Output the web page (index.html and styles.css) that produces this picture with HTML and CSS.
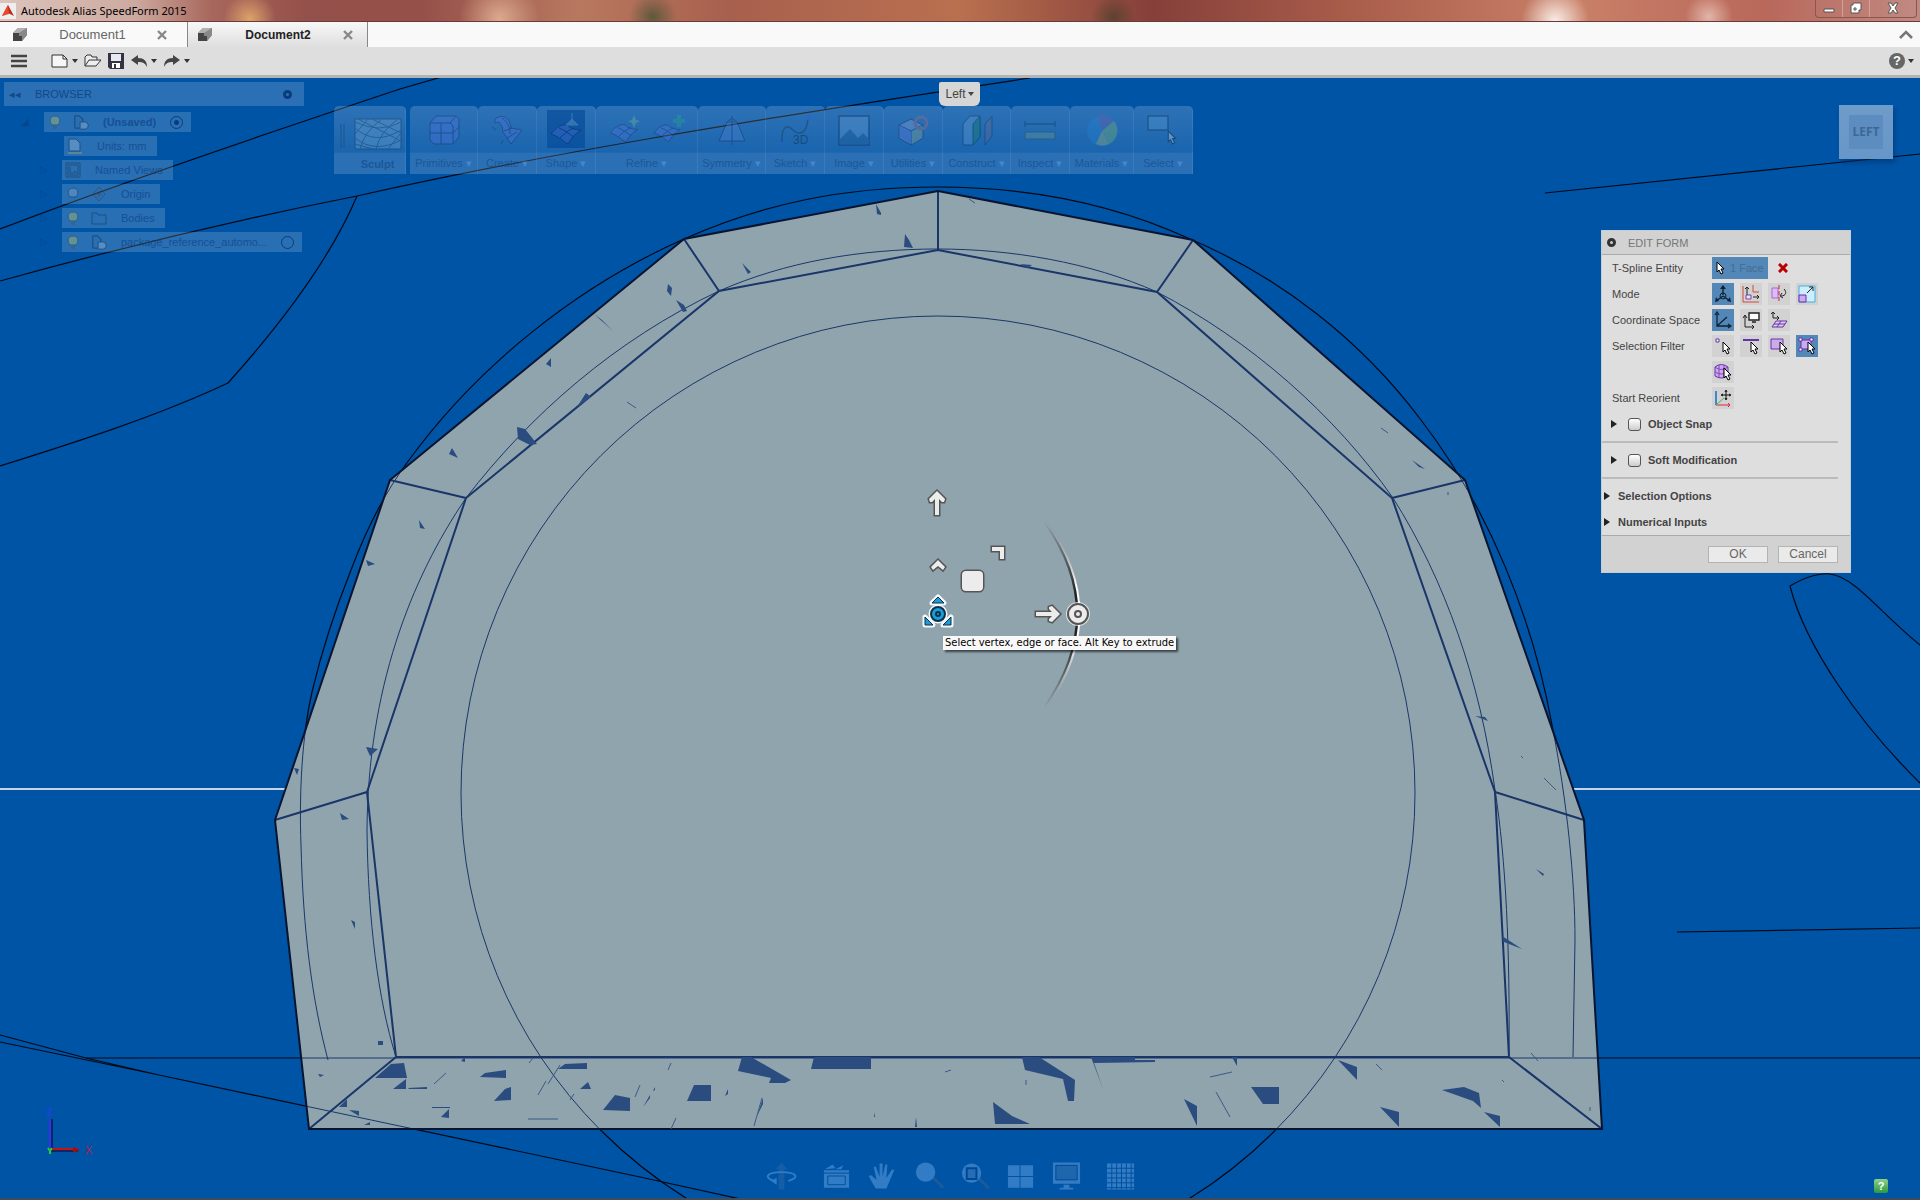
FILE: index.html
```html
<!DOCTYPE html>
<html lang="en">
<head>
  <meta charset="UTF-8">
  <meta name="viewport" content="width=device-width, initial-scale=1.0">
  <title>Autodesk Alias SpeedForm 2015</title>
  <link rel="stylesheet" href="styles.css">
</head>
<body>
  <!-- shared icons -->
  <svg class="defs" aria-hidden="true">
    <symbol id="cube" viewBox="0 0 16 16"><path d="M1 6L6 1h9v7l-5 6H1z" fill="#777"/><path d="M1 6h6v3h3v5H1z" fill="#444"/><path d="M7 6l8-5v7l-5 6V9H7z" fill="#888"/><path d="M1 6l5-5h9L7 6z" fill="#b0b0b0"/></symbol>
    <symbol id="close" viewBox="0 0 10 10"><path d="M1 1l8 8M9 1L1 9" stroke="#888" stroke-width="2.4"/></symbol>
    <symbol id="caret" viewBox="0 0 6 4"><path d="M0 0h6L3 4z" fill="currentColor"/></symbol>
    <symbol id="bulb" viewBox="0 0 16 16"><path d="M5 11C1 6 4 2 8 2s7 4 3 9z" fill="#b8c860" stroke="#344"/><path d="M6 12h4v3H6z" fill="#456"/></symbol>
    <symbol id="part" viewBox="0 0 18 18"><path d="M2 16V2h5l4 4v3M2 16h6" fill="none" stroke="#123" stroke-width="1.4"/><path d="M8 16V9h6l3 2v4l-3 2H8z" fill="#9bd" stroke="#123"/></symbol>
    <symbol id="pointer" viewBox="0 0 9 14"><path d="M1 1v10l2-2 2 4 2-1-2-4h3z" fill="#fff" stroke="#000"/></symbol>
    <symbol id="patch" viewBox="0 0 32 22"><path d="M1 11C7 3 13 1 17 2c4 4 9 5 14 5-5 3-10 8-13 14C13 18 8 13 1 11z" fill="#5a78f0" stroke="#113"/><path d="M9 5c6 2 11 7 15 9M24 5c-6 2-10 6-14 10" stroke="#113" fill="none"/></symbol>
  </svg>

  <div class="app">
    <header class="titlebar">
      <svg class="logo" viewBox="0 0 16 16"><path fill="#eee" d="M0 0h16v16H0z"/><path d="M8 2l6 11-6-3-6 3z" fill="#c22a1c"/><path d="M8 2l1 9-7 2z" fill="#e8482e"/></svg>
      <h1>Autodesk Alias SpeedForm 2015</h1>
      <div class="window-buttons">
        <button aria-label="Minimize"><svg viewBox="0 0 12 12"><path d="M1 7h10v3H1z" fill="#fff" stroke="#555"/></svg></button>
        <button aria-label="Restore"><svg viewBox="0 0 12 12"><path d="M3 1h8v7H9v3H1V3h2z" fill="#fff" stroke="#555"/><path d="M4 6h2v2H4z" fill="#fff" stroke="#555"/></svg></button>
        <button class="wide" aria-label="Close"><svg viewBox="0 0 12 12"><path d="M1 1h3l2 3 2-3h3L8 6l3 5H8L6 8l-2 3H1l3-5z" fill="#fff" stroke="#555"/></svg></button>
      </div>
    </header>

    <nav class="tabs">
      <div class="tab">
        <svg class="tab-icon"><use href="#cube"/></svg>
        <a href="#doc1">Document1</a>
        <button aria-label="Close Document1"><svg><use href="#close"/></svg></button>
      </div>
      <div class="tab active">
        <svg class="tab-icon"><use href="#cube"/></svg>
        <a href="#doc2">Document2</a>
        <button aria-label="Close Document2"><svg><use href="#close"/></svg></button>
      </div>
      <button class="collapse" aria-label="Collapse"><svg viewBox="0 0 14 9"><path d="M1 8l6-6 6 6" fill="none" stroke="#777" stroke-width="2.6"/></svg></button>
    </nav>

    <div class="quickbar">
      <button class="menu" aria-label="Menu"><svg viewBox="0 0 18 14"><path d="M1 2h16M1 7h16M1 12h16" stroke="#444" stroke-width="2.6"/></svg></button>
      <button class="drop" aria-label="New"><svg viewBox="0 0 18 14"><path d="M1 1h11l4 4v8H1z" fill="#f6f6f6" stroke="#333"/><path d="M12 1v4h4" fill="none" stroke="#333"/></svg><svg class="caret"><use href="#caret"/></svg></button>
      <button aria-label="Open"><svg viewBox="0 0 18 14"><path d="M1 12V3l2-2h4l1 2h5v3" fill="#eee" stroke="#333"/><path d="M1 12l4-6h12l-5 6z" fill="#eee" stroke="#333"/></svg></button>
      <button class="save" aria-label="Save"><svg viewBox="0 0 16 16"><path d="M0 0h16v16H2l-2-2z" fill="#334"/><path d="M3 1h10v7H3z" fill="#e6eaf0"/><path d="M4 10h8v5H4z" fill="#fff"/><path d="M6 11h2v4H6z" fill="#334"/></svg></button>
      <button class="drop" aria-label="Undo"><svg viewBox="0 0 18 14"><path d="M1 6l7-5v3c6 0 9 3 9 9-2-4-4-5-9-5v3z" fill="#444"/></svg><svg class="caret"><use href="#caret"/></svg></button>
      <button class="drop" aria-label="Redo"><svg viewBox="0 0 18 14"><path d="M17 6l-7-5v3C4 4 1 7 1 13c2-4 4-5 9-5v3z" fill="#444"/></svg><svg class="caret"><use href="#caret"/></svg></button>
      <button class="drop help" aria-label="Help"><span>?</span><svg class="caret"><use href="#caret"/></svg></button>
    </div>

    <main class="viewport">
      <svg class="scene" viewBox="0 78 1920 1120" preserveAspectRatio="xMidYMin slice">
        <defs>
          <clipPath id="body"><path id="outline" d="M938 191L1193 240 1465 480 1584 820 1602 1129H309L275 820 390 480 684 239z"/></clipPath>
          <linearGradient id="arc" x1="0" y1="0" x2="0" y2="1"><stop offset="0" stop-color="#fff" stop-opacity="0"/><stop offset=".35" stop-color="#fff"/><stop offset=".65" stop-color="#fff"/><stop offset="1" stop-color="#fff" stop-opacity="0"/></linearGradient>
          <linearGradient id="arc-dark" x1="0" y1="0" x2="0" y2="1"><stop offset="0" stop-color="#222" stop-opacity="0"/><stop offset=".4" stop-color="#222"/><stop offset=".6" stop-color="#222"/><stop offset="1" stop-color="#222" stop-opacity="0"/></linearGradient>
          <!-- construction curves, drawn black outside and navy inside the body -->
          <g id="curves">
            <path d="M0 229Q130 179 400 89L445 76"/>
            <path d="M0 281Q180 231 357 196C530 157 730 123 1030 78"/>
            <path d="M357 196C330 260 280 325 228 383C160 415 80 441 0 466"/>
            <path d="M1545 193L1920 154"/>
            <path d="M0 1035L86 1058 159 1075M0 1042L159 1075 640 1177 745 1200"/>
            <path d="M86 1058H1920"/>
            <path d="M1790 586C1808 575 1823 573 1830 574C1855 577 1880 613 1920 645M1790 586C1805 645 1858 722 1920 783"/>
            <path d="M1677 932L1920 928"/>
            <path d="M938 187C845 187 765 203 684 239C580 285 480 363 409 460C385 492 366 530 351 570C335 610 322 650 312 692C302 735 299 795 301 845C303 930 312 1000 328 1060"/>
            <path d="M938 187C1025 187 1110 202 1190 239C1280 277 1361 340 1421 420C1490 510 1533 620 1552 725C1567 800 1575 880 1575 940L1573 1057"/>
            <path d="M938 249C860 249 785 262 719 291C615 340 530 415 466 498C410 580 368 690 367 830C368 920 378 1000 396 1057"/>
            <path d="M938 249C1010 249 1090 262 1157 292C1250 340 1335 415 1393 498C1445 580 1480 680 1495 790C1506 860 1510 950 1509 1057"/>
            <circle cx="938" cy="793" r="477"/>
          </g>
        </defs>
        <path class="ground" d="M0 789H1920"/>
        <use href="#curves" class="curve"/>
        <use href="#outline" class="body"/>
        <use href="#curves" class="curve inside" clip-path="url(#body)"/>
        <path class="cage" d="M938 250L1157 292 1392 498 1495 792 1509 1057H396L367 792 466 498 719 291zM938 191V250M1193 240L1157 292M1465 480L1392 498M1584 820L1495 792M1602 1129L1509 1057M309 1129L396 1057M275 820L367 792M390 480L466 498M684 239L719 291"/>
        <use href="#outline" class="edge"/>
        <g class="shards">
          <path d="M375 1078L391 1064 404 1063 407 1078zM393 1089L406 1079V1089zM408 1088l19-1v2h-18zM339 1107l8-8v8zM349 1110l10 1v5zM364 1125l6-3v3z"/>
          <path d="M461 1061l4-4v5zM480 1077L485 1073 506 1070V1078zM494 1101L505 1089 511 1087V1100zM441 1117l8-8v9zM432 1107h18v1h-18zM558 1069L565 1064 587 1063V1069zM580 1089l8-7 3 7zM603 1110L615 1095 630 1098V1111z"/>
          <path d="M687 1101L694 1085H711V1101zM738 1071L742 1057H751L791 1080 785 1083 769 1083 771 1078zM811 1069L814 1057H871V1069zM725 1096l3-7v5zM757 1116l6-18v6zM643 1107l7-12v3zM655 1087v3l-2 1zM915 1127l1-10 1 10zM874 1117l1-5v5z"/>
          <path d="M1022 1057H1039L1075 1080 1074 1101 1068 1101 1063 1079 1025 1070zM993 1102L1012 1116 1030 1124H995zM1091 1057H1135V1060H1155V1062L1094 1063 1103 1089zM1232 1057h5v9zM1251 1087H1279V1104H1263zM1184 1099L1197 1106V1126z"/>
          <path d="M1338 1060L1357 1067V1080zM1380 1107L1399 1112V1127zM1442 1090L1464 1087 1479 1093 1481 1108 1473 1101zM1484 1112L1500 1116V1127z"/>
          <path d="M378 1041h5v4h-5zM318 1074l6 1-4 2zM876 204l5 9v2l-4-1zM887 222l2 4zM905 234l4 6 4 8-9-1zM742 263l9 9-3 2zM668 284l4 4-1 8-4-5zM676 300l8 5 3 6-4 1zM594 314l8 6 11 11zM551 358v9l-5-3zM577 407l9-14 5 4zM517 427l8 2 12 15-7 1-12-6zM501 409l9 6zM452 448l6 10-9-4zM419 520l6 9-5-1zM366 560l9 4-7 2zM366 747l12 2-8 7zM294 768l5 1-2 6zM340 813l9 6-7 1zM351 920l4 2v7z"/>
          <path d="M990 227l6 6zM1020 264l12 1-4 3zM1412 460l13 9-6-2zM1475 716l10 1 3 4zM1536 869l8 5-1 2zM1502 936l20 13-18-7zM1497 831l5 2z"/>
          <path class="hair" d="M434 1084l12-11M529 1063l4-5M538 1095l8-14M548 1084l12-19M570 1100l4-6M635 1097l5-12M754 1126l8-28M668 1070l3-7M671 1129l5-11M528 1119h30M945 1072l6-2M1026 1080v5M1210 1077l22-5M1216 1092l14 25M627 402l9 6M1376 1064l6 6M1531 1053l7 8M1502 1080l2 2M1590 1107v4M1544 778l12 12M969 199l6 4M1381 428l7 5M1448 492v3M1521 756l2 2"/>
        </g>

        <!-- manipulator -->
        <path d="M1045 521Q1111 614 1045 708" fill="none" stroke="url(#arc-dark)" stroke-width="4"/>
        <path d="M1046 521Q1113 614 1046 708" fill="none" stroke="url(#arc)" stroke-width="2"/>
        <g class="handle">
          <path d="M937 491l8 8-1 3h-2l-3-3v16h-4v-16l-3 3h-2l-1-3z"/>
          <path d="M1060 614l-8-8-3 1v2l3 3h-16v4h16l-3 3v2l3 1z"/>
          <path d="M938 560l7 7-2 3-5-4-5 4-2-3z"/>
          <path d="M992 547h12v12h-4v-8h-8z"/>
          <rect x="962" y="571" width="21" height="20" rx="4"/>
          <circle class="glow" cx="1078" cy="614" r="12"/>
          <circle class="ring" cx="1078" cy="614" r="10"/><circle class="ring" cx="1078" cy="614" r="3"/>
        </g>
        <g class="origin">
          <g class="halo"><path d="M938 597l6 6h-12zM925 617l8 8h-8zM951 617v8h-8z"/><circle cx="938" cy="614" r="7"/></g>
          <path d="M938 597l6 6h-12zM925 617l8 8h-8zM951 617v8h-8z"/><circle cx="938" cy="614" r="7"/><circle cx="938" cy="614" r="2"/>
        </g>

        <!-- world axes -->
        <path d="M50 1149V1119" stroke="#33e" stroke-width="2"/><path d="M50 1149H78" stroke="#c11" stroke-width="2"/>
        <path d="M51 1151H78M52 1149V1119" stroke="#102" fill="none"/>
        <path d="M73 1147l7 3-7 3z" fill="#911"/><path d="M48 1148l2 3 2-3M50 1150v4" fill="none" stroke="#2c4" stroke-width="2"/>
        <text x="46" y="1116" fill="#2a3cf0">Z</text><text x="85" y="1154" fill="#b0204a">X</text>
      </svg>

      <aside class="browser">
        <div class="browser-head"><span>◂◂</span><h2>BROWSER</h2><button aria-label="Collapse browser"></button></div>
        <ul>
          <li class="root"><i>◢</i><div class="chip"><svg><use href="#bulb"/></svg><svg class="gap"><use href="#part"/></svg><b>(Unsaved)</b><input type="radio" name="active" aria-label="Activate Unsaved" checked></div></li>
          <li class="units"><div class="chip"><svg viewBox="0 0 16 16"><path d="M2 13V1h7l4 4v8z" fill="#9bd" stroke="#123"/><path d="M1 15h14" stroke="#aa6" stroke-width="2"/></svg><span>Units: mm</span></div></li>
          <li><i>▷</i><div class="chip"><svg viewBox="0 0 16 16"><path d="M1 1h14v14H1zM3 3h10v10H3zM5 5v6h5M9 9l3 2" fill="none" stroke="#123"/></svg><span>Named Views</span></div></li>
          <li><i>▷</i><div class="chip"><svg viewBox="0 0 16 16"><path d="M5 11C1 6 4 2 8 2s7 4 3 9z" fill="#8ac" stroke="#134"/></svg><svg class="gap" viewBox="0 0 16 16"><path d="M8 1l6 7-6 7-6-7zM8 5v6M5 8h6" fill="none" stroke="#433"/></svg><span>Origin</span></div></li>
          <li><i>▷</i><div class="chip"><svg><use href="#bulb"/></svg><svg class="gap" viewBox="0 0 16 16"><path d="M1 3h5l1 2h8v9H1z" fill="none" stroke="#123"/></svg><span>Bodies</span></div></li>
          <li><i>▷</i><div class="chip"><svg><use href="#bulb"/></svg><svg class="gap"><use href="#part"/></svg><span>package_reference_automo...</span><input type="radio" name="active" aria-label="Activate package reference"></div></li>
        </ul>
      </aside>

      <div class="ribbon">
        <button class="sculpt"><svg viewBox="0 0 62 32"><path d="M1 6v24M4 6v24" stroke="#123"/><path d="M15 1h46v30H15z" fill="#8bd" stroke="#123"/><path d="M15 10Q35 28 61 12M15 20Q35 36 61 22M15 4Q40 16 61 4M20 31Q24 14 42 1M36 31Q40 14 58 1M15 16L28 1M48 31l13-16M18 1l43 22M32 1l29 14M15 26l18 5" fill="none" stroke="#345"/></svg><span>Sculpt</span></button>
        <div class="groups">
          <button class="w-l"><svg viewBox="0 0 32 32"><path d="M2 9l6-7h20l3 3v18l-6 7H6l-4-4z" fill="#5a78f0" stroke="#113"/><path d="M2 9h20l3 3v18M22 9l6-7M13 9v21M2 19h23M25 19l6-6" fill="none" stroke="#113"/></svg><span>Primitives</span></button>
          <button><svg viewBox="0 0 32 32"><path d="M4 5C12-1 19 4 20 14l11 2L20 30 12 18C11 9 8 7 4 9z" fill="#5a78f0" stroke="#113"/><path d="M1 13l4 3M10 30l2-4M11 4c6 4 8 10 8 16M13 17l8-3M16 24l10-6" stroke="#113" fill="none"/></svg><span>Create</span></button>
          <button><em class="pressed"><svg viewBox="0 0 32 32"><use href="#patch" y="10" width="32" height="22"/><path d="M22 0v12M16 12l6-6 6 6z" fill="#8bd" stroke="#ace"/></svg></em><span>Shape</span></button>
          <button class="w-xl"><em><svg viewBox="0 0 32 32"><use href="#patch" y="9" width="30" height="20"/><path d="M25 1l2 5 4 1-4 2-2 5-2-5-4-2 4-1z" fill="#9c8"/></svg><svg viewBox="0 0 32 32"><use href="#patch" y="9" width="28" height="20"/><path d="M24 1h4v4h4v4h-4v4h-4V9h-4V5h4z" fill="#2b7"/></svg></em><span>Refine</span></button>
          <button class="w-l"><svg viewBox="0 0 32 32"><path d="M3 27L11 8h10l8 19z" fill="#5a88e0" stroke="#113"/><path d="M16 2v29M11 8l5-4 5 4" fill="none" stroke="#113"/></svg><span>Symmetry</span></button>
          <button><svg viewBox="0 0 32 32"><path d="M3 30C2 12 8 10 14 16s14 4 15-12" fill="none" stroke="#123" stroke-width="1.6"/><path d="M27 1h5v5h-5zM1 28h4v4H1z" fill="#35e"/><text x="14" y="30" font-size="12">3D</text></svg><span>Sketch</span></button>
          <button><svg viewBox="0 0 32 32"><path d="M1 2h30v29H1z" fill="#7ad" stroke="#013" stroke-width="1.5"/><path d="M2 25l10-10 8 9 5-5 6 6v5H2z" fill="#258"/></svg><span>Image</span></button>
          <button><svg viewBox="0 0 32 32"><path d="M2 11l12-6 12 6v13l-12 7-12-7z" fill="#a9b4d8" stroke="#113"/><path d="M2 11l12 6v14M14 17l12-6" fill="none" stroke="#113"/><path d="M3 12l11 6v12L3 23z" fill="#7480f0"/><path d="M15 18l10-6v12l-10 6z" fill="#a8c080"/><circle cx="24" cy="9" r="6" fill="none" stroke="#c66" stroke-width="3"/></svg><span>Utilities</span></button>
          <button class="w-l"><svg viewBox="0 0 32 32"><path d="M2 10l7-8h10v21l-7 8H2z" fill="#7ad" stroke="#013"/><path d="M12 10l7-8v21l-7 8z" fill="#184" stroke="#013"/><path d="M24 10l7-8v20l-7 9z" fill="#768" stroke="#113"/></svg><span>Construct</span></button>
          <button><svg viewBox="0 0 32 32"><path d="M1 7v6M31 7v6M1 10h30" stroke="#123" stroke-width="1.5"/><path d="M1 18h30v7H1z" fill="#8a8" stroke="#243"/></svg><span>Inspect</span></button>
          <button class="w-m"><svg viewBox="0 0 32 32"><circle cx="16" cy="17" r="15" fill="#28d"/><path d="M16 17L12 2a15 15 0 0 1 16 5z" fill="#85a"/><path d="M16 17L28 7a15 15 0 0 1-5 23z" fill="#9c5"/><path d="M16 17l7 13a15 15 0 0 1-13 0z" fill="#cc6"/></svg><span>Materials</span></button>
          <button><svg viewBox="0 0 32 32"><path d="M1 2h20v14H1z" fill="#6ad" stroke="#123" stroke-width="1.5"/><use href="#pointer" x="20" y="16" width="10" height="15"/></svg><span>Select</span></button>
        </div>
      </div>

      <button class="view-menu">Left<svg class="caret"><use href="#caret"/></svg></button>
      <button class="viewcube"><span>LEFT</span></button>
      <div class="tooltip" role="tooltip">Select vertex, edge or face. Alt Key to extrude</div>

      <form class="panel">
        <h2><i></i>EDIT FORM</h2>
        <div class="panel-body">
          <div class="row"><span>T-Spline Entity</span><div><button type="button" class="on pick"><svg class="ptr"><use href="#pointer"/></svg>1 Face</button><button type="button" class="clear" aria-label="Clear"><svg viewBox="0 0 10 10"><path d="M1 1l8 8M9 1L1 9" stroke="#b00" stroke-width="3"/></svg></button></div></div>
          <div class="row"><span>Mode</span><div>
            <button type="button" class="on" aria-label="Multi"><svg viewBox="0 0 18 18"><path d="M9 1v9M9 11l-7 5M9 11l7 5" stroke="#123" stroke-width="1.4"/><path d="M9 0l3 4H6zM1 17l1-5 3 4zM17 17l-1-5-3 4z" fill="#123"/><circle cx="9" cy="11" r="3" fill="none" stroke="#123"/></svg></button>
            <button type="button" aria-label="Translate"><svg viewBox="0 0 18 18"><path d="M1 1v16h16M11 0v7h6" fill="none" stroke="#d54a30"/><path d="M5 10V2M3 4l2-2 2 2M11 12h6M15 10l2 2-2 2" fill="none" stroke="#222"/><path d="M4 10h5v4H4z" fill="#edf" stroke="#74a"/></svg></button>
            <button type="button" aria-label="Rotate"><svg viewBox="0 0 18 18"><path d="M2 3h6v10H2z" fill="#dbf" stroke="#a6c"/><path d="M9 0v18" stroke="#c23" stroke-dasharray="4 2"/><path d="M14 4c3 3 2 7-3 7M12 8l-2 3 3 2" fill="none" stroke="#222"/></svg></button>
            <button type="button" aria-label="Scale"><svg viewBox="0 0 18 18"><path d="M1 1h16v16H1z" fill="#cef" stroke="#4ab0dd"/><path d="M1 10h7v7H1z" fill="#cae" stroke="#63a"/><path d="M9 8l6-6M11 2h4v4" fill="none" stroke="#222"/></svg></button></div></div>
          <div class="row"><span>Coordinate Space</span><div>
            <button type="button" class="on" aria-label="World"><svg viewBox="0 0 18 18"><path d="M3 3v12h13M3 15L13 6M1 4l2-3 2 3M14 13l3 2-3 2" fill="none" stroke="#123" stroke-width="1.3"/></svg></button>
            <button type="button" aria-label="View"><svg viewBox="0 0 18 18"><path d="M7 2h10v7H7zM10 11h4" fill="#fff" stroke="#222" stroke-width="1.4"/><path d="M3 5v11h9M1 7l2-3 2 3M10 14l2 2-2 2" fill="none" stroke="#222"/></svg></button>
            <button type="button" aria-label="Selection space"><svg viewBox="0 0 18 18"><path d="M6 10h11l-4 6H2zM11 10l-4 6M4 13h11" fill="#dcf" stroke="#639"/><path d="M3 1v6h6M1 3l2-2 2 2M7 5l2 2-2 2" fill="none" stroke="#222"/></svg></button></div></div>
          <div class="row filters"><span>Selection Filter</span><div>
            <button type="button" aria-label="Vertex"><svg viewBox="0 0 18 18"><path d="M2 2h3v3H2z" fill="#fff" stroke="#63a"/><use href="#pointer" x="8" y="4" width="9" height="14"/></svg></button>
            <button type="button" aria-label="Edge"><svg viewBox="0 0 18 18"><path d="M1 3h16" stroke="#63a" stroke-width="2"/><use href="#pointer" x="8" y="4" width="9" height="14"/></svg></button>
            <button type="button" aria-label="Face"><svg viewBox="0 0 18 18"><path d="M1 2h12v10H1z" fill="#cae" stroke="#63a"/><use href="#pointer" x="9" y="4" width="9" height="14"/></svg></button>
            <button type="button" class="on" aria-label="All"><svg viewBox="0 0 18 18"><path d="M3 3h10v9H3z" fill="#cae" stroke="#63a"/><path d="M1 1h3v3H1zM12 1h3v3h-3zM1 11h3v3H1z" fill="#fff" stroke="#63a"/><use href="#pointer" x="9" y="4" width="9" height="14"/></svg></button>
            <button type="button" aria-label="Body"><svg viewBox="0 0 18 18"><path d="M1 4q6-5 13 0v9q-7 4-13 0z" fill="#cae" stroke="#63a"/><path d="M1 4q6 5 13 0M1 9q6 4 13 0M5 2v12M10 2v12" fill="none" stroke="#84b"/><use href="#pointer" x="9" y="4" width="9" height="14"/></svg></button></div></div>
          <div class="row"><span>Start Reorient</span><div><button type="button" aria-label="Start Reorient"><svg viewBox="0 0 18 18"><path d="M2 16V2" stroke="#06c" stroke-width="1.4"/><path d="M2 16h14M14 14l2 2-2 2" stroke="#d24" fill="none"/><path d="M2 16L10 9" stroke="#4b4"/><path d="M12 2v8M8 6h8M11 3l1-2 1 2M11 9l1 2 1-2M9 5L7 6l2 1M15 5l2 1-2 1" stroke="#111" fill="none"/></svg></button></div></div>
          <div class="check"><i></i><input type="checkbox" id="snap"><label for="snap">Object Snap</label></div>
          <hr>
          <div class="check"><i></i><input type="checkbox" id="soft"><label for="soft">Soft Modification</label></div>
          <hr>
          <button type="button" class="section"><i></i>Selection Options</button>
          <button type="button" class="section"><i></i>Numerical Inputs</button>
        </div>
        <footer><button type="button">OK</button><button type="button">Cancel</button></footer>
      </form>

      <div class="navbar">
        <button class="first" aria-label="Orbit"><svg viewBox="0 0 32 30"><path d="M13 8h-3l6-7 6 7h-3v21h-6z" fill="#3a6ea8"/><path d="M8 20C-2 17 0 11 16 11s19 6 7 9" fill="none" stroke="#8cc4ff" stroke-width="2"/><path d="M5 20l6-3v7z" fill="#8cc4ff"/></svg></button>
        <button aria-label="Look at"><svg viewBox="0 0 32 30"><path d="M3 9h26v18H3zM4 8l8-5 3 4zM15 8l8-4-2 4z" fill="#8cc4ff"/><path d="M3 12h26M7 15h18v9H7z" fill="none" stroke="#048"/></svg></button>
        <button aria-label="Pan"><svg viewBox="0 0 32 30"><path d="M9 28C7 24 4 20 2 15l2-1 6 5L7 6l2-1 4 11V2h3v14l3-13h2l-1 14 6-9 2 1-5 12-3 7z" fill="#8cc4ff"/></svg></button>
        <button aria-label="Zoom"><svg viewBox="0 0 32 30"><path d="M20 16l11 11" stroke="#567" stroke-width="3"/><circle cx="13" cy="11" r="10" fill="#8cc4ff"/></svg></button>
        <button aria-label="Fit"><svg viewBox="0 0 32 30"><path d="M20 17l11 11" stroke="#567" stroke-width="3"/><circle cx="13" cy="12" r="10" fill="#8cc4ff"/><path d="M8 7h10v11H8z" fill="#69d" stroke="#036" stroke-width="2"/></svg></button>
        <button aria-label="Viewports"><svg viewBox="0 0 32 30"><path d="M3 4h12v11H3zM16 4h13v11H16zM3 16h12v11H3zM16 16h13v11H16z" fill="#8cc4ff"/></svg></button>
        <button aria-label="Display"><svg viewBox="0 0 32 30"><path d="M2 1h28v22H2zM13 24h6v3h4v2H9v-2h4z" fill="#8cc4ff"/><path d="M5 4h22v15H5z" fill="#58b" stroke="#036"/></svg></button>
        <button class="last" aria-label="Grid"><svg viewBox="0 0 32 30"><path d="M2 2h28v27H2z" fill="#8cc4ff"/><path d="M7 2v27M12 2v27M17 2v27M22 2v27M27 2v27M2 7h28M2 12h28M2 17h28M2 22h28M2 27h28" stroke="#048"/></svg></button>
      </div>
      <button class="hint" aria-label="Tips">?</button>
    </main>
  </div>
</body>
</html>
```

FILE: styles.css
```css
* {
  box-sizing: border-box;
}

body {
  margin: 0;
  font-family: "Liberation Sans", Arial, sans-serif;
  font-size: 11px;
  color: #444;
  background: #0054a6;
}

button {
  margin: 0;
  padding: 0;
  border: 0;
  background: none;
  font: inherit;
  color: inherit;
}

h1, h2, ul {
  margin: 0;
  padding: 0;
  font-size: inherit;
  font-weight: normal;
  list-style: none;
}

i, em {
  font-style: normal;
}

svg {
  display: block;
}

.defs {
  position: absolute;
  width: 0;
  height: 0;
}

.app {
  display: flex;
  flex-direction: column;
  height: 100vh;
  border-bottom: 2px solid #3c4c5c;
}

/* title bar */
.titlebar {
  display: flex;
  align-items: center;
  height: 22px;
  border-bottom: 1px solid #6a3a3a;
  background:
    radial-gradient(circle at 26% 90%, rgba(255, 215, 180, .6), transparent 40px),
    radial-gradient(circle at 13% 90%, rgba(236, 180, 110, .8), transparent 26px),
    radial-gradient(circle at 34% 80%, rgba(60, 80, 50, .7), transparent 24px),
    radial-gradient(circle at 58% 80%, rgba(60, 60, 40, .6), transparent 22px),
    radial-gradient(circle at 81% 100%, rgba(255, 250, 245, .9), transparent 34px),
    radial-gradient(circle at 89% 80%, rgba(240, 210, 200, .7), transparent 24px),
    linear-gradient(90deg, #dcc4bc 0, #cdaaa0 7%, #a8675c 11%, #94504a 16%, #96504a 22%, #b8785f 30%, #a8604e 38%, #b9704f 50%, #86403a 60%, #a85c4a 70%, #c98068 82%, #b9685a 92%, #c08a82 100%);
}

.logo {
  width: 16px;
  height: 16px;
}

.titlebar h1 {
  margin-left: 5px;
  font: 12px "Noto Sans", "Open Sans", sans-serif;
  font-size: 11px;
  color: #000;
}

.window-buttons {
  display: flex;
  height: 18px;
  margin: 0 3px 4px auto;
  border: 1px solid #8b5550;
  border-top: 0;
  border-radius: 0 0 4px 4px;
}

.window-buttons button {
  width: 27px;
  border-right: 1px solid #d0a09a;
}

.window-buttons .wide {
  width: 46px;
  border: 0;
}

.window-buttons svg {
  width: 12px;
  height: 12px;
  margin: auto;
}

/* document tabs */
.tabs {
  display: flex;
  height: 25px;
  background: #f9f9f9;
}

.tab {
  display: flex;
  align-items: center;
  width: 188px;
  padding: 0 20px 0 12px;
  border-right: 1px solid #888;
}

.tab.active {
  width: 180px;
  padding: 0 14px 0 9px;
  background: linear-gradient(#f8f8f8, #dedede);
}

.tab a {
  flex: 1;
  text-align: center;
  font-size: 13px;
  color: #666;
  text-decoration: none;
}

.tab.active a {
  font-size: 12px;
  font-weight: bold;
  color: #222;
}

.tab-icon {
  width: 16px;
  height: 16px;
}

.tab button svg {
  width: 10px;
  height: 10px;
}

.collapse {
  margin: 0 7px 0 auto;
}

.collapse svg {
  width: 14px;
  height: 9px;
}

/* quick access bar */
.quickbar {
  display: flex;
  align-items: center;
  gap: 6px;
  height: 31px;
  padding: 0 6px 0 10px;
  border-bottom: 3px solid #b4b4b4;
  background: #dedede;
}

.quickbar svg {
  width: 18px;
  height: 14px;
}

.quickbar .save svg {
  width: 16px;
  height: 16px;
}

.quickbar .menu {
  margin-right: 17px;
}

.drop {
  display: flex;
  align-items: center;
  gap: 3px;
  color: #333;
}

.quickbar .caret,
.view-menu .caret {
  width: 6px;
  height: 4px;
}

.quickbar .help {
  margin-left: auto;
}

.help span {
  width: 16px;
  height: 16px;
  border-radius: 8px;
  background: #666;
  color: #fff;
  font-size: 13px;
  font-weight: bold;
  line-height: 16px;
}

/* canvas */
.viewport {
  position: relative;
  flex: 1;
  overflow: hidden;
  background: #0054a6;
}

.scene {
  width: 100%;
  height: 100%;
}

.scene text {
  font-size: 11px;
}

.ground {
  stroke: #c8d4e4;
  stroke-width: 2;
}

.curve {
  fill: none;
  stroke: #020814;
  stroke-width: 1.2;
}

.inside {
  stroke: #1a3868;
  stroke-width: 1;
}

.body {
  fill: #90a4ae;
}

.cage {
  fill: none;
  stroke: #1a3568;
  stroke-width: 2;
}

.edge {
  fill: none;
  stroke: #081430;
  stroke-width: 2;
}

.shards {
  fill: #2a4c7e;
}

.shards .hair {
  fill: none;
  stroke: #3c5a84;
}

.handle {
  fill: #ececec;
  stroke: #555;
  stroke-width: 3;
  paint-order: stroke;
}

.handle .glow {
  fill: rgba(255, 255, 255, .7);
  stroke: none;
}

.handle .ring {
  stroke-width: 2;
  paint-order: normal;
}

.origin {
  fill: #1b9bd8;
  stroke: #0b3048;
  stroke-width: 1;
}

.origin circle {
  stroke-width: 2;
}

.origin .halo,
.origin .halo circle {
  stroke: #f4f8fa;
  stroke-width: 5;
  stroke-linejoin: round;
}

/* browser tree */
.browser {
  position: absolute;
  top: 4px;
  left: 4px;
  width: 300px;
  color: #0a3c7c;
}

.browser-head {
  display: flex;
  align-items: center;
  gap: 14px;
  height: 24px;
  margin-bottom: 6px;
  padding: 0 12px 0 5px;
  background: rgba(255, 255, 255, .17);
  color: #12488a;
}

.browser-head button {
  width: 9px;
  height: 9px;
  margin-left: auto;
  border: 3px solid #0a3c7c;
  border-radius: 5px;
}

.browser li {
  display: flex;
  height: 20px;
  margin-bottom: 4px;
  padding-left: 36px;
}

.browser li.root {
  padding-left: 17px;
}

.browser li.units {
  padding-left: 60px;
}

.browser i {
  flex: none;
  width: 22px;
  font-size: 10px;
  line-height: 20px;
  opacity: .6;
}

.browser .root i {
  width: 23px;
}

.chip {
  display: flex;
  align-items: center;
  gap: 14px;
  padding: 0 10px 0 3px;
  background: rgba(255, 255, 255, .16);
}

.chip svg {
  width: 16px;
  height: 16px;
  opacity: .4;
}

.chip .gap {
  margin-left: -4px;
}

.chip span,
.chip b {
  opacity: .6;
}

.chip input {
  appearance: none;
  width: 13px;
  height: 13px;
  margin: 0 -2px 0 0;
  border: 1px solid #0a3c7c;
  border-radius: 7px;
}

.chip input:checked {
  background: radial-gradient(#0a3c7c 2px, transparent 3px);
}

/* ribbon */
.ribbon {
  position: absolute;
  top: 28px;
  left: 334px;
  display: flex;
  gap: 4px;
  height: 68px;
  color: #0c3f80;
}

.ribbon button {
  display: flex;
  flex-direction: column;
  align-items: center;
  justify-content: space-between;
  width: 59px;
  padding: 8px 0 4px;
  border-right: 1px solid rgba(255, 255, 255, .08);
  border-radius: 5px 5px 0 0;
  background: linear-gradient(rgba(255, 255, 255, .18), rgba(255, 255, 255, .1) 68%, rgba(255, 255, 255, .17) 69%);
}

.ribbon button > span {
  opacity: .5;
}

.groups span::after {
  content: " ▾";
  color: #8bf;
  opacity: .6;
}

.ribbon svg {
  width: 32px;
  height: 32px;
  opacity: .28;
}

.ribbon .sculpt {
  width: 72px;
  padding: 12px 4px 4px 6px;
  font-weight: bold;
}

.ribbon .sculpt svg {
  width: 62px;
  height: 32px;
}

.ribbon .sculpt span {
  padding-left: 14px;
}

.groups {
  display: flex;
}

.ribbon .w-m {
  width: 64px;
}

.ribbon .w-l {
  width: 68px;
}

.ribbon .w-xl {
  width: 102px;
}

.ribbon em {
  display: flex;
  gap: 12px;
}

.ribbon .pressed {
  margin-top: -4px;
  padding: 3px;
  background: rgba(0, 70, 150, .6);
}

/* view controls */
.view-menu {
  position: absolute;
  top: 4px;
  left: 50%;
  display: flex;
  align-items: center;
  justify-content: center;
  gap: 2px;
  width: 41px;
  height: 24px;
  margin-left: -21px;
  border-radius: 2px 2px 6px 6px;
  background: #d6d6d6;
  font-size: 12px;
}

.viewcube {
  position: absolute;
  top: 27px;
  right: 27px;
  width: 54px;
  height: 54px;
  padding: 10px;
  background: linear-gradient(#6f9bca, #6796c8);
  box-shadow: 2px 4px 4px rgba(0, 50, 110, .5);
}

.viewcube span {
  display: block;
  background: #5d8cc0;
  font: bold 12px/34px "Open Sans", sans-serif;
  color: #3c6896;
}

.tooltip {
  position: absolute;
  top: 558px;
  left: 943px;
  padding: 0 2px;
  background: #f8f8f8;
  box-shadow: 2px 2px 2px rgba(0, 0, 0, .6);
  font: 11px/14px "DejaVu Sans Condensed", "DejaVu Sans", sans-serif;
  color: #000;
  white-space: nowrap;
}

/* edit form */
.panel {
  position: absolute;
  top: 152px;
  right: 69px;
  width: 250px;
  border: 1px solid #c4ccd4;
  background: #dedede;
}

.panel h2 {
  display: flex;
  align-items: center;
  gap: 12px;
  height: 24px;
  padding-left: 5px;
  border-bottom: 1px solid #aaa;
  background: #d2d2d2;
  color: #777;
}

.panel h2 i {
  width: 9px;
  height: 9px;
  border: 3px solid #333;
  border-radius: 5px;
  background: #ccc;
}

.panel-body {
  padding-right: 12px;
}

.row {
  display: flex;
  padding-left: 10px;
  line-height: 26px;
}

.row > span {
  width: 100px;
}

.row > div {
  display: flex;
  flex: 1;
  flex-wrap: wrap;
  gap: 4px 6px;
  padding: 2px 0;
}

.row button {
  width: 22px;
  height: 22px;
  padding: 2px;
  background: #d2d2d2;
}

.row svg {
  width: 18px;
  height: 18px;
}

.row button.on {
  background: #5287b8;
}

.row .pick {
  display: flex;
  align-items: center;
  gap: 5px;
  width: 56px;
  padding: 0 4px;
  color: #456c92;
  white-space: nowrap;
}

.row .pick .ptr {
  flex: none;
  width: 9px;
  height: 14px;
}

.row .clear {
  padding: 0 4px;
  background: none;
}

.row .clear svg {
  width: 10px;
  height: 10px;
}

.check {
  display: flex;
  align-items: center;
  height: 26px;
  padding-left: 9px;
  font-weight: bold;
}

.check i,
.section i {
  border: 4px solid transparent;
  border-left: 6px solid #222;
  border-right: 0;
}

.check input {
  appearance: none;
  width: 13px;
  height: 13px;
  margin: 0 7px 0 11px;
  border: 1px solid #555;
  border-radius: 3px;
  background: linear-gradient(#fff, #ccc);
}

.panel hr {
  height: 2px;
  margin: 4px 0;
  border: 0;
  background: #bbb;
}

.section {
  display: flex;
  align-items: center;
  gap: 8px;
  width: 100%;
  height: 26px;
  padding-left: 2px;
  font-weight: bold;
}

.panel footer {
  display: flex;
  justify-content: flex-end;
  gap: 10px;
  height: 37px;
  padding: 10px 12px;
  border-top: 1px solid #aaa;
  background: #d2d2d2;
}

.panel footer button {
  width: 60px;
  height: 17px;
  border: 1px solid #b4b4b4;
  background: #eaeaea;
  font-size: 12px;
  line-height: 15px;
  color: #666;
}

/* navigation bar */
.navbar {
  position: absolute;
  bottom: 7px;
  left: 50%;
  display: flex;
  gap: 15px;
  margin-left: -194px;
  opacity: .36;
}

.navbar svg {
  width: 31px;
  height: 30px;
}

.navbar .first {
  margin-right: 9px;
}

.navbar .last {
  margin-left: 8px;
}

.hint {
  position: absolute;
  right: 32px;
  bottom: 5px;
  width: 14px;
  height: 14px;
  border-radius: 2px;
  background: linear-gradient(#8fd08a, #2a9a3c);
  color: #fff;
  font-weight: bold;
}
```
